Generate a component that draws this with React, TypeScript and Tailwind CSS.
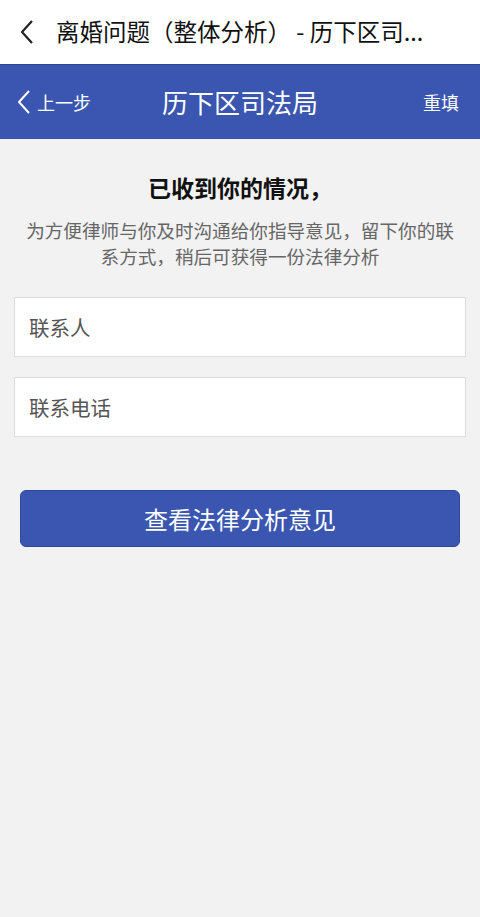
export default function App() {
  const font = { fontFamily: '"Noto Sans CJK SC", "Noto Sans", sans-serif' };
  return (
    <div className="min-h-[917px] w-[480px] bg-[#f2f2f2]" style={font}>
      <div className="flex h-[64px] items-center bg-white pl-[18px]">
        <svg width="18" height="26" viewBox="0 0 18 26" className="shrink-0">
          <path d="M14 2 L4 13 L14 24" fill="none" stroke="#222" strokeWidth="2.2" strokeLinejoin="round" />
        </svg>
        <span className="ml-[20px] text-[23.5px] leading-none text-[#111]">离婚问题（整体分析） - 历下区司...</span>
      </div>

      <div className="flex h-[75px] items-center justify-between border-t border-[#2b4699] bg-[#3a56b0] px-[16px] text-white">
        <div className="flex w-[100px] items-center">
          <svg width="16" height="26" viewBox="0 0 16 26" className="shrink-0">
            <path d="M13 2 L3 13 L13 24" fill="none" stroke="#fff" strokeWidth="2" strokeLinejoin="round" />
          </svg>
          <span className="ml-[5px] text-[18px] leading-none">上一步</span>
        </div>
        <span className="text-[26px] leading-none">历下区司法局</span>
        <span className="w-[100px] pr-[5px] text-right text-[18px] leading-none">重填</span>
      </div>

      <div className="px-[14px]">
        <h1 className="mt-[33px] text-center text-[23px] font-bold leading-[30px] text-[#111]">已收到你的情况，</h1>
        <p className="mt-[15px] px-[8px] text-center text-[18.6px] leading-[26px] text-[#666]">
          为方便律师与你及时沟通给你指导意见，留下你的联系方式，稍后可获得一份法律分析
        </p>

        <div className="mt-[28px] flex h-[60px] items-center border border-[#dcdcdc] bg-white px-[14px] text-[20.5px] text-[#555]">联系人</div>
        <div className="mt-[20px] flex h-[60px] items-center border border-[#dcdcdc] bg-white px-[14px] text-[20.5px] text-[#555]">联系电话</div>

        <div className="mx-[6px] mt-[53px] flex h-[57px] items-center justify-center rounded-[6px] border border-[#2e4a9f] bg-[#3a56b0] text-[24px] text-white">
          查看法律分析意见
        </div>
      </div>
    </div>
  );
}
